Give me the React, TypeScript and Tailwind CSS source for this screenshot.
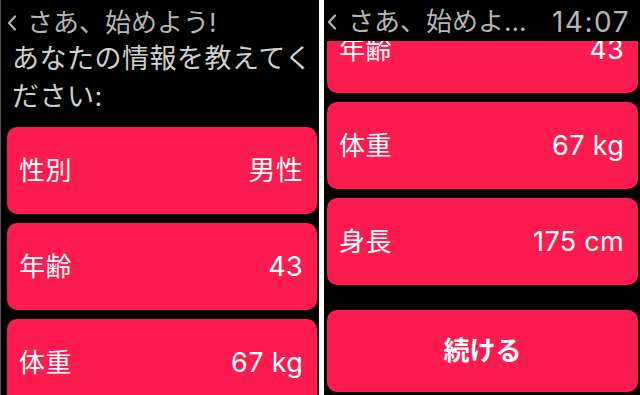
import React from 'react';

const font = "font-['Inter','Noto_Sans_CJK_JP',sans-serif]";

type Row = { label: string; value: string };

const rows: Row[] = [
  { label: '性別', value: '男性' },
  { label: '年齢', value: '43' },
  { label: '体重', value: '67 kg' },
  { label: '身長', value: '175 cm' },
];

function Chevron() {
  return (
    <svg width="10" height="16" viewBox="0 0 10 16" className="shrink-0">
      <path d="M8 1.5 L2 8 L8 14.5" fill="none" stroke="#b5b5b5" strokeWidth="2.2" strokeLinecap="round" strokeLinejoin="round" />
    </svg>
  );
}

function RowCard({ row }: { row: Row }) {
  return (
    <div className="h-[87px] shrink-0 rounded-[10px] bg-[#fd1b4f] flex items-center justify-between pl-[12px] pr-[14px] text-white">
      <span className="text-[26px] leading-none tracking-[0.5px]">{row.label}</span>
      <span className="text-[27px] leading-none tracking-[0.3px]">{row.value}</span>
    </div>
  );
}

export default function App() {
  return (
    <div className={`w-[640px] h-[395px] bg-black flex overflow-hidden ${font}`}>
      {/* left watch screen */}
      <div className="w-[319px] h-full border-l border-[#555] flex flex-col pl-[6px] pr-[2px] overflow-hidden">
        <div className="h-[42px] pt-[4px] flex items-center text-[26px] leading-none text-[#b5b5b5] shrink-0">
          <Chevron />
          <span className="ml-[10px]">さあ、始めよう!</span>
        </div>
        <p className="text-[27px] leading-[38px] tracking-[0.5px] text-[#d0d0d0] pl-[5px] -mt-[2px] shrink-0">
          あなたの情報を教えてください:
        </p>
        <div className="mt-[11px] flex flex-col gap-[9px]">
          {rows.slice(0, 3).map(r => (
            <RowCard key={r.label} row={r} />
          ))}
        </div>
      </div>

      <div className="w-[5px] h-full bg-white shrink-0" />

      {/* right watch screen, scrolled */}
      <div className="relative flex-1 h-full overflow-hidden pl-[3px] pr-[2px]">
        <div className="pt-[6px] flex flex-col gap-[9px]">
          {rows.slice(1).map(r => (
            <RowCard key={r.label} row={r} />
          ))}
          <button className="mt-[16px] h-[82px] rounded-[10px] bg-[#fd1b4f] text-white text-[26px] font-bold leading-none">
            続ける
          </button>
        </div>
        <div className="absolute top-0 left-0 right-0 h-[41px] bg-black flex items-center pt-[3px] pl-[3px] pr-[10px] text-[26px] leading-none text-[#b5b5b5]">
          <Chevron />
          <span className="ml-[11px]">さあ、始めよ…</span>
          <span className="ml-auto text-[28px] tracking-[1.5px]">14:07</span>
        </div>
      </div>
    </div>
  );
}
